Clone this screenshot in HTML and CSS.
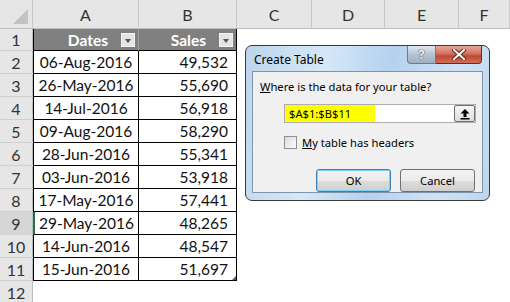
FILE: index.html
```html
<!DOCTYPE html>
<html lang="en">
<head>
    <meta charset="UTF-8">
    <title>Create Table</title>
    <link rel="stylesheet" href="styles.css">
</head>
<body>

    <div class="sheet">
        <!-- column headers -->
        <div class="row head">
            <div class="corner"><span class="corner-tri"></span></div>
            <div class="col">A</div>
            <div class="col">B</div>
            <div class="col">C</div>
            <div class="col">D</div>
            <div class="col">E</div>
            <div class="col">F</div>
        </div>

        <div class="row first">
            <div class="num">1</div>
            <div class="cell a th">Dates <span class="filter"></span></div>
            <div class="cell b th">Sales <span class="filter"></span></div>
        </div>
        <div class="row">
            <div class="num">2</div>
            <div class="cell a">06-Aug-2016</div>
            <div class="cell b">49,532</div>
        </div>
        <div class="row">
            <div class="num">3</div>
            <div class="cell a">26-May-2016</div>
            <div class="cell b">55,690</div>
        </div>
        <div class="row">
            <div class="num">4</div>
            <div class="cell a">14-Jul-2016</div>
            <div class="cell b">56,918</div>
        </div>
        <div class="row">
            <div class="num">5</div>
            <div class="cell a">09-Aug-2016</div>
            <div class="cell b">58,290</div>
        </div>
        <div class="row">
            <div class="num">6</div>
            <div class="cell a">28-Jun-2016</div>
            <div class="cell b">55,341</div>
        </div>
        <div class="row">
            <div class="num">7</div>
            <div class="cell a">03-Jun-2016</div>
            <div class="cell b">53,918</div>
        </div>
        <div class="row">
            <div class="num">8</div>
            <div class="cell a">17-May-2016</div>
            <div class="cell b">57,441</div>
        </div>
        <div class="row">
            <div class="num selected">9</div>
            <div class="cell a active">29-May-2016</div>
            <div class="cell b">48,265</div>
        </div>
        <div class="row">
            <div class="num">10</div>
            <div class="cell a">14-Jun-2016</div>
            <div class="cell b">48,547</div>
        </div>
        <div class="row">
            <div class="num">11</div>
            <div class="cell a">15-Jun-2016</div>
            <div class="cell b last">51,697<span class="resize"></span></div>
        </div>
        <div class="row">
            <div class="num">12</div>
        </div>
    </div>

    <!-- Create Table dialog -->
    <div class="dialog">
        <div class="titlebar">
            <span class="title">Create Table</span>
            <div class="caption-btns">
                <span class="help-btn">?</span>
                <span class="close-btn">
                    <svg width="14" height="11" viewBox="0 0 14 11">
                        <path d="M2 1 L12 10 M12 1 L2 10" stroke="#5a2a22" stroke-width="4" stroke-linecap="square"/>
                        <path d="M2 1 L12 10 M12 1 L2 10" stroke="#fff" stroke-width="2" stroke-linecap="square"/>
                    </svg>
                </span>
            </div>
        </div>
        <div class="client">
            <p class="prompt"><u>W</u>here is the data for your table?</p>
            <div class="range-box">
                <span class="range-text">$A$1:$B$11</span>
                <span class="collapse-btn">
                    <svg width="12" height="12" viewBox="0 0 12 12">
                        <path d="M6 1 L10.5 5.5 L7.5 5.5 L7.5 9 L4.5 9 L4.5 5.5 L1.5 5.5 Z" fill="#000"/>
                        <rect x="1.5" y="10" width="9" height="1.5" fill="#000"/>
                    </svg>
                </span>
            </div>
            <label class="check-row">
                <span class="checkbox"></span>
                <span><u>M</u>y table has headers</span>
            </label>
            <div class="buttons">
                <span class="btn default">OK</span>
                <span class="btn">Cancel</span>
            </div>
        </div>
    </div>

</body>
</html>
```

FILE: styles.css
```css
/* Reset */
* {
    margin: 0;
    padding: 0;
    box-sizing: border-box;
}

body {
    width: 510px;
    height: 302px;
    overflow: hidden;
    background: #fff;
    font-family: Lato, "Liberation Sans", sans-serif;
    position: relative;
}

/* Spreadsheet grid */
.sheet {
    display: flex;
    flex-direction: column;
}

.row {
    display: grid;
    grid-template-columns: 33px 106px 98px 75px 73px 74px 1fr;
    height: 23px;
    flex-shrink: 0;
}

.row.head {
    height: 29px;
    background: #e6e6e6;
    border-bottom: 1px solid #bdbdbd;
}

.row.first {
    height: 22px;
}

.corner {
    position: relative;
    border-right: 1px solid #c8c8c8;
}

.corner-tri {
    position: absolute;
    right: 4px;
    bottom: 4px;
    width: 0;
    height: 0;
    border-left: 15px solid transparent;
    border-bottom: 15px solid #c3c3c3;
}

.col {
    display: flex;
    align-items: center;
    justify-content: center;
    font-size: 16px;
    color: #333;
    border-right: 1px solid #c8c8c8;
}

.num {
    display: flex;
    align-items: center;
    justify-content: center;
    background: #e6e6e6;
    border-right: 1px solid #bdbdbd;
    border-bottom: 1px solid #d0d0d0;
    font-size: 16px;
    color: #333;
}

.num.selected {
    background: #d6d6d6;
}

.cell {
    display: flex;
    align-items: center;
    white-space: nowrap;
    font-size: 15.5px;
    color: #111;
    border-right: 1px solid #000;
    border-bottom: 1px solid #000;
    overflow: hidden;
}

.cell.a {
    justify-content: center;
    border-left: 1px solid #000;
}

.cell.b {
    justify-content: flex-end;
    padding-right: 8px;
}

.cell.active {
    border-left: 2px solid #217346;
}

.cell.th {
    background: #808080;
    color: #fff;
    font-weight: bold;
    justify-content: flex-end;
    padding-right: 3px;
    gap: 13px;
}

.cell.a.th {
    border-right-color: #a0a0a0;
}

.filter {
    width: 14px;
    height: 14px;
    background: #e4e4e4;
    border: 1px solid #f4f4f4;
    position: relative;
}

.filter::after {
    content: "";
    position: absolute;
    left: 3px;
    top: 5px;
    border-left: 3.5px solid transparent;
    border-right: 3.5px solid transparent;
    border-top: 4px solid #555;
}

.cell.last {
    position: relative;
}

.resize {
    position: absolute;
    right: 0;
    bottom: 0;
    border-left: 4px solid transparent;
    border-bottom: 4px solid #3b5ea8;
}

/* Dialog */
.dialog {
    position: absolute;
    left: 245px;
    top: 45px;
    width: 245px;
    height: 156px;
    border: 1px solid #3a3a3a;
    border-radius: 7px;
    background: linear-gradient(100deg, #bcd5ec 0%, #d6e8f8 30%, #b5d1ee 55%, #cfe3f6 80%, #bdd6ee 100%);
    padding: 0 6px 7px 6px;
    display: flex;
    flex-direction: column;
    font-family: "Noto Sans", "Open Sans", sans-serif;
    color: #000;
}

.titlebar {
    height: 27px;
    display: flex;
    justify-content: space-between;
    align-items: flex-start;
}

.title {
    font-size: 12px;
    margin: 5px 0 0 2px;
}

.caption-btns {
    display: flex;
    margin-right: 1px;
}

.help-btn {
    width: 29px;
    height: 18px;
    border: 1px solid #6d7a88;
    border-top: none;
    border-radius: 0 0 0 4px;
    background: linear-gradient(#dfe8f1, #b4c3d3 50%, #9fb0c2);
    font-size: 13px;
    font-weight: bold;
    color: #f4f7fa;
    text-align: center;
    line-height: 16px;
    text-shadow: 0 0 1px #333, 0 0 1px #333;
}

.close-btn {
    width: 46px;
    height: 18px;
    border: 1px solid #6b2b22;
    border-top: none;
    border-left: none;
    border-radius: 0 0 4px 0;
    background: linear-gradient(#e9a99c, #d0705e 45%, #c04a33 60%, #d46d55);
    display: flex;
    align-items: center;
    justify-content: center;
}

.client {
    flex: 1;
    background: #f0f0f0;
    border: 1px solid #8193a8;
    padding: 6px 7px 0 7px;
    font-size: 11.2px;
}

.prompt {
    line-height: 17px;
}

.range-box {
    margin: 9px 0 0 24px;
    height: 19px;
    width: 192px;
    border: 1px solid #abadb3;
    background: #fff;
    display: flex;
    align-items: center;
    justify-content: space-between;
}

.range-text {
    background: #ffff00;
    height: 100%;
    width: 90px;
    padding-left: 4px;
    line-height: 17px;
}

.collapse-btn {
    width: 21px;
    height: 17px;
    border: 1px solid #707070;
    border-radius: 2px;
    background: linear-gradient(#f6f6f6, #dedede);
    display: flex;
    align-items: center;
    justify-content: center;
}

.check-row {
    display: flex;
    align-items: center;
    gap: 5px;
    margin: 12px 0 0 24px;
}

.checkbox {
    width: 13px;
    height: 13px;
    border: 1px solid #8f8f8f;
    background: linear-gradient(135deg, #dcdcdc, #fbfbfb);
}

.buttons {
    display: flex;
    justify-content: flex-end;
    gap: 9px;
    margin-top: 19px;
}

.btn {
    width: 75px;
    height: 23px;
    border: 1px solid #707070;
    border-radius: 3px;
    background: linear-gradient(#f2f2f2 0%, #ebebeb 50%, #dddddd 51%, #cfcfcf 100%);
    display: flex;
    align-items: center;
    justify-content: center;
}

.btn.default {
    border-color: #3c7fb1;
    box-shadow: inset 0 0 0 1px #7fd2f6;
}
```
